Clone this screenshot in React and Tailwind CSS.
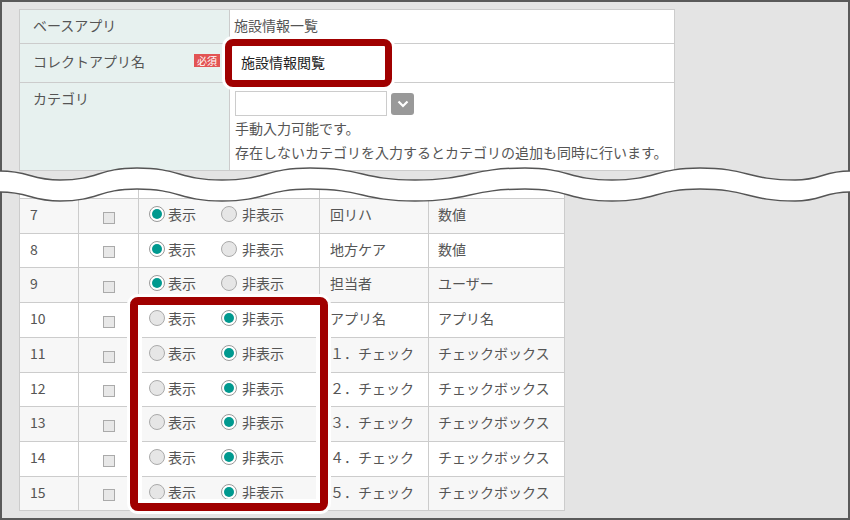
const WAVE = [[0, 11], [60, 20], [137, 8], [222, 20], [310, 8], [415, 20], [525, 8], [612, 20], [700, 8], [795, 20], [850, 11]];

function curve(pts, dy, start) {
  let d = start ? `M${pts[0][0]} ${pts[0][1] + dy}` : `L${pts[0][0]} ${pts[0][1] + dy}`;
  for (let i = 1; i < pts.length; i++) {
    const [x0, y0] = pts[i - 1];
    const [x1, y1] = pts[i];
    const m = (x1 - x0) / 2;
    d += ` C${x0 + m} ${y0 + dy} ${x1 - m} ${y1 + dy} ${x1} ${y1 + dy}`;
  }
  return d;
}

function Wave() {
  const back = [...WAVE].reverse();
  const band = curve(WAVE, 0, true) + ' ' + curve(back, 21, false) + ' Z';
  return (
    <svg className="absolute -left-[2px] top-[158px]" width="850" height="50" viewBox="0 0 850 50">
      <path d={band} fill="#fff" />
      <path d={curve(WAVE, 0, true)} fill="none" stroke="#555" strokeWidth="1.5" />
      <path d={curve(WAVE, 21, true)} fill="none" stroke="#555" strokeWidth="1.5" />
    </svg>
  );
}

function Radio({ on }) {
  if (on) {
    return (
      <span className="mb-[1px] inline-flex h-4 w-4 shrink-0 items-center justify-center rounded-full border border-[#999] bg-white">
        <span className="h-[10px] w-[10px] rounded-full bg-[#00998f]" />
      </span>
    );
  }
  return <span className="mb-[1px] inline-block h-4 w-4 shrink-0 rounded-full border border-[#aaa] bg-[#e6e6e6]" />;
}

const rows = [
  { n: '7', h: 'h-[35px]', show: true, a: '回リハ', b: '数値' },
  { n: '8', h: 'h-[34px]', show: true, a: '地方ケア', b: '数値' },
  { n: '9', h: 'h-[35px]', show: true, a: '担当者', b: 'ユーザー' },
  { n: '10', h: 'h-[35px]', show: false, a: 'アプリ名', b: 'アプリ名' },
  { n: '11', h: 'h-[35px]', show: false, a: '１．チェック', b: 'チェックボックス' },
  { n: '12', h: 'h-[34px]', show: false, a: '２．チェック', b: 'チェックボックス' },
  { n: '13', h: 'h-[35px]', show: false, a: '３．チェック', b: 'チェックボックス' },
  { n: '14', h: 'h-[35px]', show: false, a: '４．チェック', b: 'チェックボックス' },
  { n: '15', h: 'h-[34px]', show: false, a: '５．チェック', b: 'チェックボックス' },
];

function TopTable() {
  return (
    <div className="w-[656px] border border-[#ccc] bg-white">
      <div className="flex h-[34px] border-b border-[#ccc]">
        <div className="flex w-[210px] items-center border-r border-[#ccc] bg-[#e7f1ef] pb-[3px] pl-[13px]">ベースアプリ</div>
        <div className="flex items-center pb-[3px] pl-[4px]">施設情報一覧</div>
      </div>
      <div className="flex h-[39px] border-b border-[#ccc]">
        <div className="flex w-[210px] items-center justify-between border-r border-[#ccc] bg-[#e7f1ef] pb-[3px] pl-[13px] pr-[9px]">
          <span>コレクトアプリ名</span>
          <span className="mb-[2px] h-[13px] w-[26px] bg-[#e25454] text-center text-[10px] leading-[13px] text-white">必須</span>
        </div>
        <div className="flex items-center pb-[2px] pl-[11px] text-[#222]">施設情報閲覧</div>
      </div>
      <div className="flex h-[87px]">
        <div className="w-[210px] border-r border-[#ccc] bg-[#e7f1ef] pl-[13px] pt-[3px] leading-[24px]">カテゴリ</div>
        <div className="pl-[5px] pt-[8px]">
          <div className="flex items-center">
            <div className="h-[25px] w-[152px] border border-[#ccc] bg-white" />
            <div className="ml-[4px] flex h-[22px] w-[23px] items-center justify-center rounded-[3px] bg-[#999]">
              <svg width="12" height="8" viewBox="0 0 12 8">
                <path d="M1.5 1.5 L6 6 L10.5 1.5" fill="none" stroke="#fff" strokeWidth="2.2" />
              </svg>
            </div>
          </div>
          <div className="leading-[24px]">手動入力可能です。</div>
          <div className="leading-[24px]">存在しないカテゴリを入力するとカテゴリの追加も同時に行います。</div>
        </div>
      </div>
    </div>
  );
}

function BottomTable() {
  return (
    <div className="w-[546px] border-l border-[#ccc]">
      <div className="flex h-[19px] border-b border-[#ccc] bg-white">
        <div className="w-[59px] border-r border-[#ccc]" />
        <div className="w-[60px] border-r border-[#ccc]" />
        <div className="w-[181px] border-r border-[#ccc]" />
        <div className="w-[109px] border-r border-[#ccc]" />
        <div className="w-[136px] border-r border-[#ccc]" />
      </div>
      {rows.map((r) => (
        <div key={r.n} className={`flex border-b border-[#ccc] ${r.h} ${Number(r.n) % 2 ? 'bg-[#f7f7f7]' : 'bg-white'}`}>
          <div className="flex w-[59px] items-center border-r border-[#ccc] pb-[3px] pl-[10px]">{r.n}</div>
          <div className="flex w-[60px] items-center justify-center border-r border-[#ccc]">
            <span className="mt-[3px] h-[12px] w-[12px] border border-[#aaa] bg-[#e8e8e8]" />
          </div>
          <div className="flex w-[181px] items-center border-r border-[#ccc] pb-[3px] pl-[10px]">
            <Radio on={r.show} />
            <span className="ml-[3px]">表示</span>
            <span className="ml-[25px] flex items-center">
              <Radio on={!r.show} />
              <span className="ml-[5px]">非表示</span>
            </span>
          </div>
          <div className="flex w-[109px] items-center border-r border-[#ccc] pb-[3px] pl-[10px]">{r.a}</div>
          <div className="flex w-[136px] items-center border-r border-[#ccc] pb-[3px] pl-[9px]">{r.b}</div>
        </div>
      ))}
    </div>
  );
}

export default function App() {
  return (
    <div className="relative h-[520px] w-[850px] border-2 border-[#5a5a5a] bg-[#e4e4e4] font-['Noto_Sans_CJK_JP','Noto_Sans',sans-serif] text-[14px] text-[#555]">
      <div className="h-[178px] pl-[17px] pt-[7px]">
        <TopTable />
      </div>
      <div className="pl-[17px]">
        <BottomTable />
      </div>
      <Wave />
      <div className="absolute left-[223px] top-[37px] h-[48px] w-[167px] rounded-[8px] border-[7px] border-[#a00000] shadow-[0_0_0_3px_#fff]" />
      <div className="absolute left-[128px] top-[295px] h-[214px] w-[198px] rounded-[8px] border-[8px] border-[#a00000] shadow-[0_0_0_3px_#fff,inset_0_0_0_4px_#fff]" />
    </div>
  );
}
